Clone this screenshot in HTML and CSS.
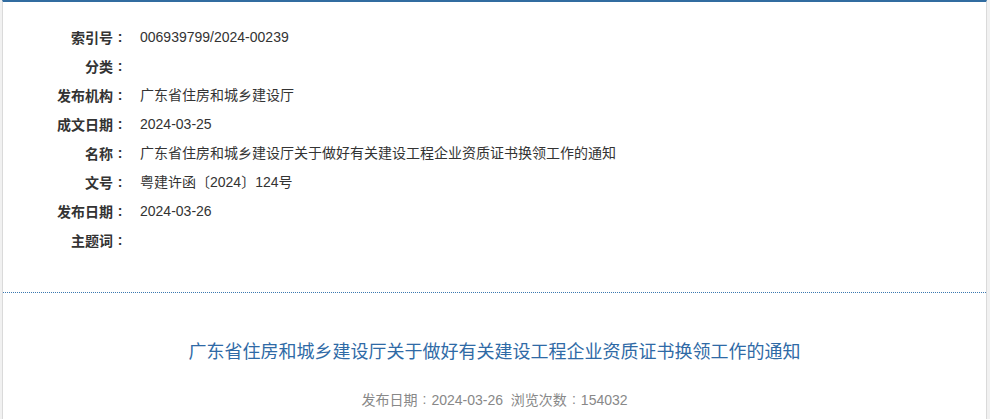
FILE: index.html
```html
<!DOCTYPE html>
<html lang="zh-CN">
<head>
<meta charset="utf-8">
<title>广东省住房和城乡建设厅关于做好有关建设工程企业资质证书换领工作的通知</title>
<link rel="stylesheet" href="styles.css">
</head>
<body>
<div class="frame">
  <div class="panel">
    <div class="info">
      <div class="label">索引号<span class="colon">:</span></div><div class="value">006939799/2024-00239</div>
      <div class="label">分类<span class="colon">:</span></div><div class="value"></div>
      <div class="label">发布机构<span class="colon">:</span></div><div class="value">广东省住房和城乡建设厅</div>
      <div class="label">成文日期<span class="colon">:</span></div><div class="value">2024-03-25</div>
      <div class="label">名称<span class="colon">:</span></div><div class="value">广东省住房和城乡建设厅关于做好有关建设工程企业资质证书换领工作的通知</div>
      <div class="label">文号<span class="colon">:</span></div><div class="value">粤建许函〔2024〕124号</div>
      <div class="label">发布日期<span class="colon">:</span></div><div class="value">2024-03-26</div>
      <div class="label">主题词<span class="colon">:</span></div><div class="value"></div>
    </div>
    <div class="article">
      <h1 class="title">广东省住房和城乡建设厅关于做好有关建设工程企业资质证书换领工作的通知</h1>
      <div class="meta">发布日期<span class="colon">:</span>2024-03-26&nbsp;&nbsp;浏览次数<span class="colon">:</span>154032</div>
    </div>
  </div>
</div>
</body>
</html>
```
FILE: styles.css
```css
html, body {
  margin: 0;
  padding: 0;
  background: #ffffff;
}
body {
  font-family: "Liberation Sans", "Noto Sans CJK SC", sans-serif;
  color: #333333;
}
.frame {
  background: #f1f1f1;
  padding: 0 3px 0 2px;
  height: 419px;
  box-sizing: border-box;
  overflow: hidden;
}
.panel {
  background: #ffffff;
  border-left: 1px solid #dadada;
  border-right: 1px solid #dadada;
  border-top: 2px solid #316ca0;
  height: 100%;
  box-sizing: border-box;
}
.info {
  display: grid;
  grid-template-columns: 124px 1fr;
  column-gap: 13px;
  padding-top: 21px;
  padding-bottom: 37px;
  border-bottom: 1px dotted #3a78b0;
}
.label,
.value {
  height: 29px;
  line-height: 29px;
  font-size: 14px;
  white-space: nowrap;
}
.label {
  text-align: right;
  font-weight: bold;
  color: #333333;
}
.value {
  color: #333333;
}
.colon {
  display: inline-block;
  width: 1em;
  text-align: center;
  vertical-align: 1px;
}
.article {
  text-align: center;
  padding-top: 44px;
}
.title {
  margin: 0;
  font-size: 18px;
  font-weight: normal;
  line-height: 30px;
  color: #2f6aa6;
}
.meta {
  margin-top: 22px;
  font-size: 14px;
  line-height: 20px;
  color: #888888;
}
```
